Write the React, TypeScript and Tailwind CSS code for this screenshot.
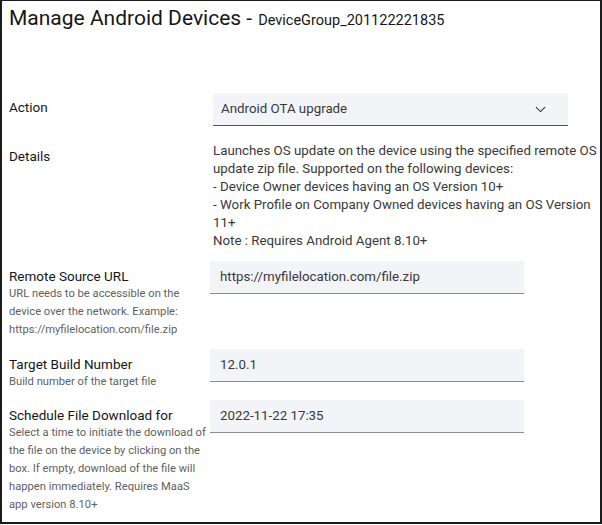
import { ChevronDown } from 'lucide-react';

const font = { fontFamily: 'Roboto, "Liberation Sans", sans-serif' };

function Field({ label, help, value }: { label: string; help: string[]; value: string }) {
  return (
    <div className="flex">
      <div className="w-[201px] shrink-0 pt-[6px]">
        <div className="text-[13.5px] leading-[18px] text-[#161616]">{label}</div>
        {help.map((h) => (
          <div key={h} className="text-[11.2px] leading-[18px] text-[#5f5f5f] whitespace-nowrap">{h}</div>
        ))}
      </div>
      <div className="w-[314px] h-[33px] bg-[#f2f4f8] border-b border-[#8d8d8d] flex items-center px-[10px] text-[13.3px] text-[#393939]">
        {value}
      </div>
    </div>
  );
}

export default function App() {
  return (
    <div style={font} className="w-[602px] h-[524px] bg-white border-t border-x-2 border-b-2 border-[#1b1b1b] overflow-hidden">
      {/* Título */}
      <div className="pl-[7px] pt-[3px] flex items-baseline whitespace-nowrap text-[#161616]">
        <span className="text-[21px] leading-[28px]">Manage Android Devices -</span>
        <span className="ml-[6px] text-[14.5px] leading-[28px]">DeviceGroup_201122221835</span>
      </div>

      <div className="pl-[7px] mt-[58px]">
        {/* Action */}
        <div className="flex">
          <div className="w-[204px] shrink-0 pt-[5px] text-[13.5px] leading-[18px] text-[#161616]">Action</div>
          <div className="w-[355px] h-[33px] bg-[#f2f4f8] border-b border-[#555] flex items-center justify-between pl-[8px] pr-[19px] text-[13.3px] text-[#393939]">
            <span>Android OTA upgrade</span>
            <ChevronDown className="w-[17px] h-[17px] text-[#393939]" strokeWidth={1.5} />
          </div>
        </div>

        {/* Details */}
        <div className="flex mt-[16px]">
          <div className="w-[204px] shrink-0 pt-[5px] text-[13.5px] leading-[18px] text-[#161616]">Details</div>
          <div className="text-[13.3px] leading-[18px] text-[#393939] whitespace-nowrap">
            <div>Launches OS update on the device using the specified remote OS</div>
            <div>update zip file. Supported on the following devices:</div>
            <div>- Device Owner devices having an OS Version 10+</div>
            <div>- Work Profile on Company Owned devices having an OS Version</div>
            <div>11+</div>
            <div>Note : Requires Android Agent 8.10+</div>
          </div>
        </div>

        <div className="mt-[11px]">
          <Field
            label="Remote Source URL"
            help={['URL needs to be accessible on the', 'device over the network. Example:', 'https://myfilelocation.com/file.zip']}
            value="https://myfilelocation.com/file.zip"
          />
        </div>
        <div className="mt-[10px]">
          <Field label="Target Build Number" help={['Build number of the target file']} value="12.0.1" />
        </div>
        <div className="mt-[9px]">
          <Field
            label="Schedule File Download for"
            help={[
              'Select a time to initiate the download of',
              'the file on the device by clicking on the',
              'box. If empty, download of the file will',
              'happen immediately. Requires MaaS',
              'app version 8.10+',
            ]}
            value="2022-11-22 17:35"
          />
        </div>
      </div>
    </div>
  );
}
